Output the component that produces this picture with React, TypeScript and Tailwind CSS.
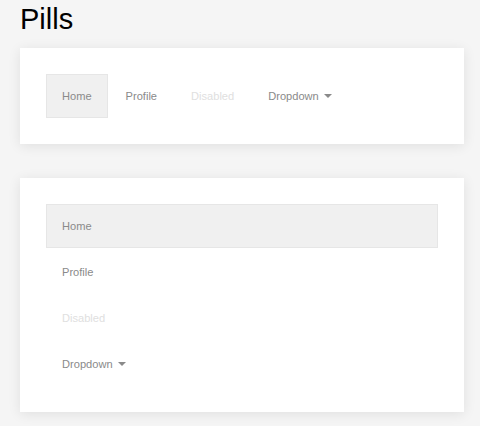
import { ReactNode } from "react"

type Pill = {
    label: string
    active?: boolean
    disabled?: boolean
    dropdown?: boolean
}

const PILLS: Pill[] = [
    { label: "Home", active: true },
    { label: "Profile" },
    { label: "Disabled", disabled: true },
    { label: "Dropdown", dropdown: true },
]

function Caret() {
    return <span className="ml-[5px] inline-block h-0 w-0 border-x-[4px] border-t-[4px] border-x-transparent border-t-[#8a8a8a] align-middle" />
}

function PillItem({ pill, full }: { pill: Pill; full?: boolean }) {
    const base = "flex h-[44px] items-center px-[15px] text-[11.1px] border"
    const state = pill.active
        ? "bg-[#f0f0f0] border-[#e6e6e6] text-[#8a8a8a]"
        : pill.disabled
            ? "border-transparent text-[#e0e0e0]"
            : "border-transparent text-[#8a8a8a]"
    return (
        <div className={`${base} ${state} ${full ? "w-full" : ""}`}>
            {pill.label}
            {pill.dropdown && <Caret />}
        </div>
    )
}

function Card({ children }: { children: ReactNode }) {
    return (
        <div className="bg-white p-[26px] shadow-[0_2px_12px_rgba(0,0,0,0.09)]">
            {children}
        </div>
    )
}

export default function App() {
    return (
        <div className="min-h-[426px] bg-[#f5f5f5] pl-[20px] pr-[16px] pb-[14px] pt-0 font-['Liberation_Sans',Arial,sans-serif]">
            <h1 className="h-[48px] pt-[1px] text-[29px] leading-[36px] text-black">Pills</h1>

            <Card>
                <div className="flex gap-[2px]">
                    {PILLS.map((p) => <PillItem key={p.label} pill={p} />)}
                </div>
            </Card>

            <div className="h-[34px]" />

            <Card>
                <div className="flex flex-col gap-[2px]">
                    {PILLS.map((p) => <PillItem key={p.label} pill={p} full />)}
                </div>
            </Card>
        </div>
    )
}
